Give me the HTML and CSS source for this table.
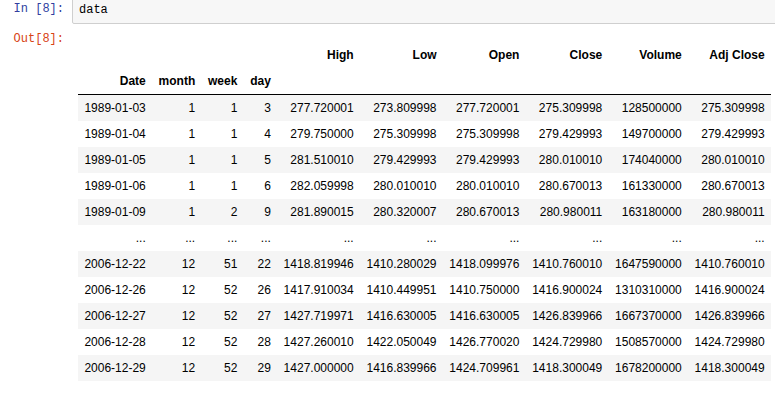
FILE: index.html
```html
<!DOCTYPE html>
<html lang="en">
  <head>
    <meta charset="UTF-8" />
    <title>data</title>
    <link rel="stylesheet" href="styles.css">
  </head>
  <body>
    <div class="cell">
      <div class="input">
        <div class="prompt in-prompt">In&nbsp;[8]:</div>
        <div class="input-area">data</div>
      </div>
      <div class="output">
        <div class="prompt out-prompt">Out[8]:</div>
        <div class="output-area">
          <table class="dataframe">
            <thead>
              <tr>
                <th></th><th></th><th></th><th></th>
                <th>High</th><th>Low</th><th>Open</th><th>Close</th><th>Volume</th><th>Adj Close</th>
              </tr>
              <tr>
                <th>Date</th><th>month</th><th>week</th><th>day</th>
                <th></th><th></th><th></th><th></th><th></th><th></th>
              </tr>
            </thead>
            <tbody id="rows"></tbody>
          </table>
        </div>
      </div>
    </div>

    <script>
      const rows = [
        ['1989-01-03', 1, 1, 3, '277.720001', '273.809998', '277.720001', '275.309998', '128500000', '275.309998'],
        ['1989-01-04', 1, 1, 4, '279.750000', '275.309998', '275.309998', '279.429993', '149700000', '279.429993'],
        ['1989-01-05', 1, 1, 5, '281.510010', '279.429993', '279.429993', '280.010010', '174040000', '280.010010'],
        ['1989-01-06', 1, 1, 6, '282.059998', '280.010010', '280.010010', '280.670013', '161330000', '280.670013'],
        ['1989-01-09', 1, 2, 9, '281.890015', '280.320007', '280.670013', '280.980011', '163180000', '280.980011'],
        null,
        ['2006-12-22', 12, 51, 22, '1418.819946', '1410.280029', '1418.099976', '1410.760010', '1647590000', '1410.760010'],
        ['2006-12-26', 12, 52, 26, '1417.910034', '1410.449951', '1410.750000', '1416.900024', '1310310000', '1416.900024'],
        ['2006-12-27', 12, 52, 27, '1427.719971', '1416.630005', '1416.630005', '1426.839966', '1667370000', '1426.839966'],
        ['2006-12-28', 12, 52, 28, '1427.260010', '1422.050049', '1426.770020', '1424.729980', '1508570000', '1424.729980'],
        ['2006-12-29', 12, 52, 29, '1427.000000', '1416.839966', '1424.709961', '1418.300049', '1678200000', '1418.300049']
      ];

      const tbody = document.getElementById('rows');
      rows.forEach((r) => {
        const tr = document.createElement('tr');
        const cells = r || Array(10).fill('...');
        cells.forEach((v, i) => {
          const cell = document.createElement(i < 4 ? 'th' : 'td');
          cell.textContent = v;
          tr.appendChild(cell);
        });
        tbody.appendChild(tr);
      });
    </script>
  </body>
</html>
```

FILE: styles.css
```css
body {
  margin: 0;
  background: #fff;
  font-family: "Liberation Sans", Arial, sans-serif;
  overflow: hidden;
}
.input, .output {
  display: flex;
  align-items: flex-start;
}
.prompt {
  width: 72px;
  flex-shrink: 0;
  box-sizing: border-box;
  padding-right: 8px;
  text-align: right;
  font-family: "Liberation Mono", "Courier New", monospace;
  font-size: 12px;
  line-height: 17px;
}
.in-prompt {
  color: #303f9f;
  padding-top: 1px;
}
.out-prompt {
  color: #d84315;
  padding-top: 7px;
}
.input-area {
  flex: 1;
  margin-top: -2px;
  margin-right: -4px;
  height: 26px;
  box-sizing: border-box;
  padding: 3px 6px;
  background: #f7f7f7;
  border: 1px solid #cfcfcf;
  border-radius: 2px;
  font-family: "Liberation Mono", "Courier New", monospace;
  font-size: 12px;
  line-height: 17px;
  color: #000;
}
.output-area {
  padding: 18px 0 0 6px;
}
.dataframe {
  border-collapse: collapse;
  font-size: 12px;
  color: #000;
}
.dataframe th, .dataframe td {
  padding: 6px 6.4px;
  line-height: 14px;
  text-align: right;
  white-space: nowrap;
  border: none;
}
.dataframe th {
  font-weight: bold;
}
.dataframe tbody th {
  font-weight: normal;
}
.dataframe thead {
  border-bottom: 1px solid #000;
}
.dataframe tbody tr:nth-child(odd) {
  background: #f5f5f5;
}
```
